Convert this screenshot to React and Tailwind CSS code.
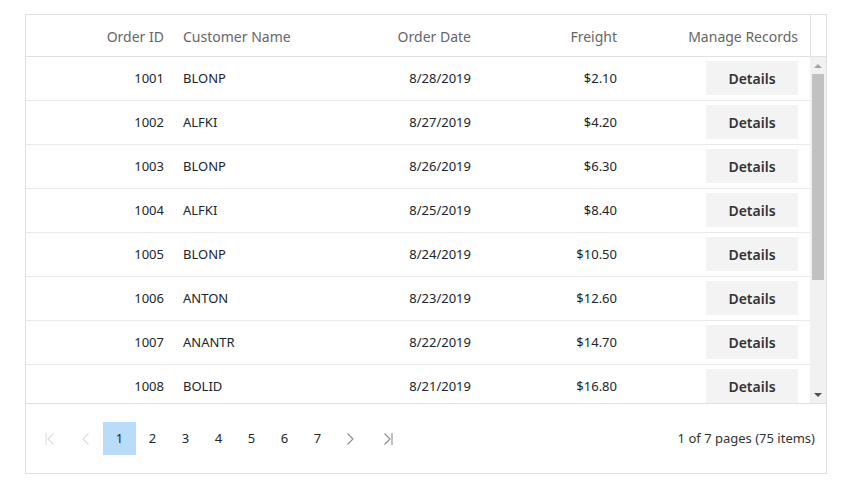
import React from 'react';

const orders = [
  { id: 1001, customer: 'BLONP', date: '8/28/2019', freight: '$2.10' },
  { id: 1002, customer: 'ALFKI', date: '8/27/2019', freight: '$4.20' },
  { id: 1003, customer: 'BLONP', date: '8/26/2019', freight: '$6.30' },
  { id: 1004, customer: 'ALFKI', date: '8/25/2019', freight: '$8.40' },
  { id: 1005, customer: 'BLONP', date: '8/24/2019', freight: '$10.50' },
  { id: 1006, customer: 'ANTON', date: '8/23/2019', freight: '$12.60' },
  { id: 1007, customer: 'ANANTR', date: '8/22/2019', freight: '$14.70' },
  { id: 1008, customer: 'BOLID', date: '8/21/2019', freight: '$16.80' },
  { id: 1009, customer: 'BLONP', date: '8/20/2019', freight: '$18.90' },
];

const Chevron = ({ dir = 'right', bar = false, color }) => (
  <svg width="12" height="16" viewBox="0 0 12 16" fill="none" stroke={color} strokeWidth="1.1">
    {dir === 'right' ? <path d="M2.5 2.5 L8 8 L2.5 13.5" /> : <path d="M9.5 2.5 L4 8 L9.5 13.5" />}
    {bar && (dir === 'right' ? <path d="M10 2 V14" /> : <path d="M2 2 V14" />)}
  </svg>
);

const App = () => {
  return (
    <div className="w-[852px] h-[487px] bg-white pt-[14px] pl-[25px]" style={{ fontFamily: '"Noto Sans", "Open Sans", sans-serif' }}>
      <div className="w-[802px] h-[460px] border border-[#e0e0e0] flex flex-col">
        {/* Header */}
        <div className="flex h-[42px] border-b border-[#e0e0e0] text-[14px] text-[#666]">
          <div className="flex flex-1 pt-px">
            <div className="w-[150px] pr-[12px] flex items-center justify-end">Order ID</div>
            <div className="w-[157px] pl-[7px] flex items-center">Customer Name</div>
            <div className="w-[150px] pr-[12px] flex items-center justify-end">Order Date</div>
            <div className="w-[146px] pr-[12px] flex items-center justify-end">Freight</div>
            <div className="flex-1 pr-[12px] flex items-center justify-end">Manage Records</div>
          </div>
          <div className="w-[16px] border-l border-[#e0e0e0]" />
        </div>

        {/* Rows */}
        <div className="flex h-[347px] border-b border-[#e0e0e0]">
          <div className="flex-1 overflow-hidden text-[13px] text-[#212529]">
            {orders.map((o) => (
              <div key={o.id} className="flex h-[44px] border-b border-[#e9e9e9]">
                <div className="w-[150px] pr-[12px] flex items-center justify-end">{o.id}</div>
                <div className="w-[157px] pl-[7px] flex items-center">{o.customer}</div>
                <div className="w-[150px] pr-[12px] flex items-center justify-end">{o.date}</div>
                <div className="w-[146px] pr-[12px] flex items-center justify-end">{o.freight}</div>
                <div className="flex-1 pr-[12px] pt-[4px] flex justify-end">
                  <button className="w-[92px] h-[34px] bg-[#f3f3f3] text-[14px] font-semibold text-[#333]">Details</button>
                </div>
              </div>
            ))}
          </div>
          {/* Scrollbar */}
          <div className="w-[16px] bg-[#f1f1f1] flex flex-col items-center">
            <div className="h-[17px] flex items-center justify-center">
              <div className="w-0 h-0 border-l-[4px] border-r-[4px] border-b-[4px] border-l-transparent border-r-transparent border-b-[#a3a3a3]" />
            </div>
            <div className="w-[12px] h-[206px] bg-[#c1c1c1]" />
            <div className="flex-1" />
            <div className="h-[17px] flex items-center justify-center">
              <div className="w-0 h-0 border-l-[4px] border-r-[4px] border-t-[4px] border-l-transparent border-r-transparent border-t-[#505050]" />
            </div>
          </div>
        </div>

        {/* Pager */}
        <div className="flex-1 flex items-center pl-[6px] pr-[11px] text-[13px] text-[#212529]">
          <div className="flex items-center">
            <div className="w-[35px] h-[33px] flex items-center justify-center">
              <Chevron dir="left" bar color="#dcdcdc" />
            </div>
            <div className="w-[35px] h-[33px] flex items-center justify-center">
              <Chevron dir="left" color="#dcdcdc" />
            </div>
            <div className="ml-px flex">
              {[1, 2, 3, 4, 5, 6, 7].map((n) => (
                <div
                  key={n}
                  className={n === 1 ? 'w-[33px] h-[33px] flex items-center justify-center bg-[#b8dcfa]' : 'w-[33px] h-[33px] flex items-center justify-center'}
                >
                  {n}
                </div>
              ))}
            </div>
            <div className="w-[34px] h-[33px] flex items-center justify-center">
              <Chevron dir="right" color="#8a8a8a" />
            </div>
            <div className="ml-[2px] w-[36px] h-[33px] flex items-center justify-center">
              <Chevron dir="right" bar color="#8a8a8a" />
            </div>
          </div>
          <div className="ml-auto text-[#333]">1 of 7 pages (75 items)</div>
        </div>
      </div>
    </div>
  );
};

export default App;
